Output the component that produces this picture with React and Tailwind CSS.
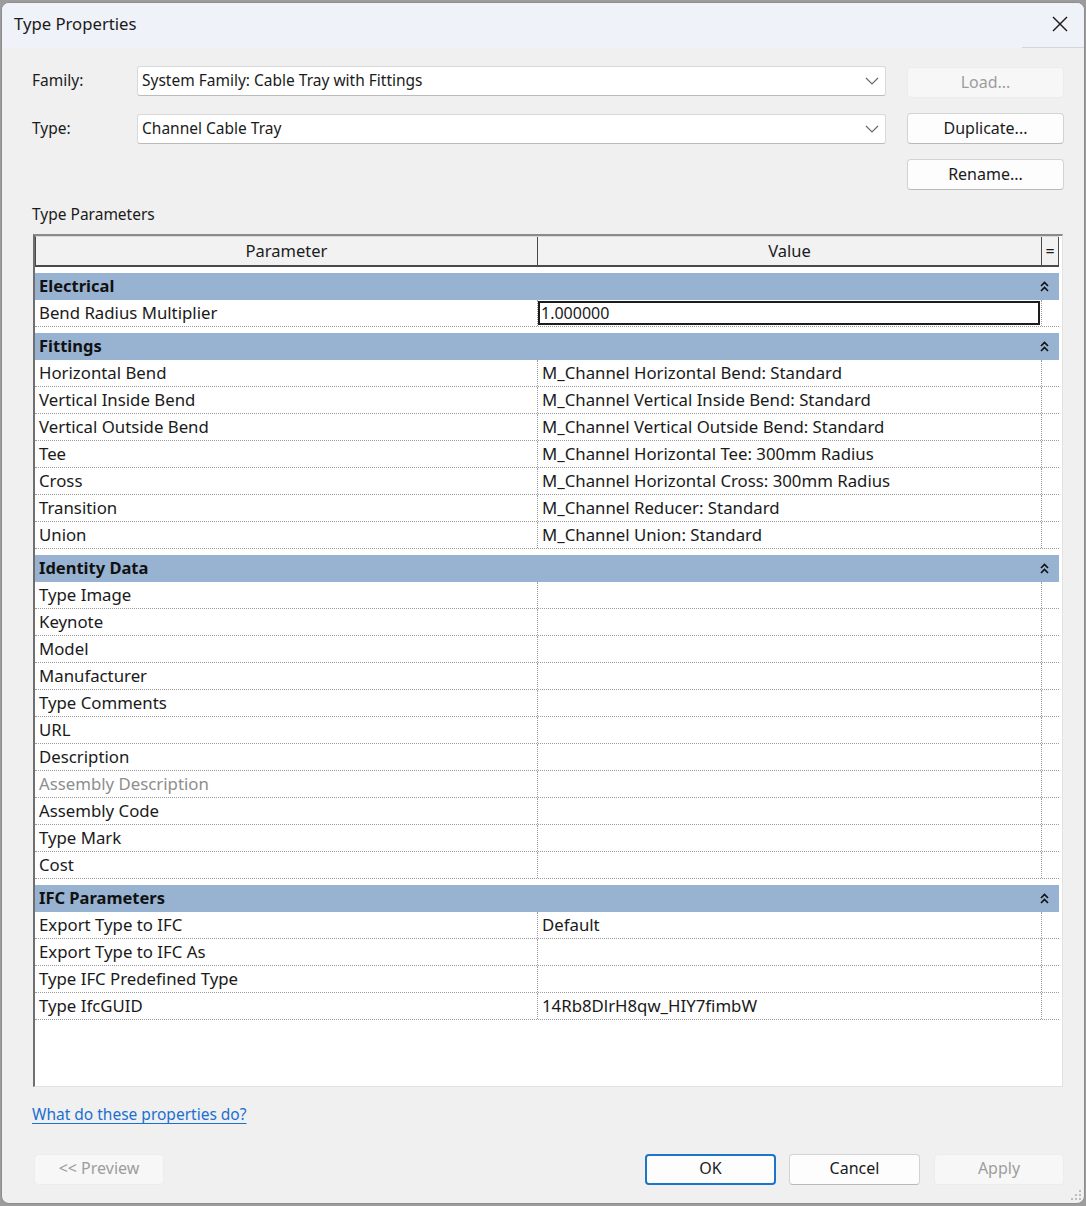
import React from "react";

const FONT = { fontFamily: '"Noto Sans", "Open Sans", sans-serif' };

const groups = [
  {
    name: "Electrical",
    rows: [{ name: "Bend Radius Multiplier", value: "1.000000", editing: true }],
  },
  {
    name: "Fittings",
    rows: [
      { name: "Horizontal Bend", value: "M_Channel Horizontal Bend: Standard" },
      { name: "Vertical Inside Bend", value: "M_Channel Vertical Inside Bend: Standard" },
      { name: "Vertical Outside Bend", value: "M_Channel Vertical Outside Bend: Standard" },
      { name: "Tee", value: "M_Channel Horizontal Tee: 300mm Radius" },
      { name: "Cross", value: "M_Channel Horizontal Cross: 300mm Radius" },
      { name: "Transition", value: "M_Channel Reducer: Standard" },
      { name: "Union", value: "M_Channel Union: Standard" },
    ],
  },
  {
    name: "Identity Data",
    rows: [
      { name: "Type Image" },
      { name: "Keynote" },
      { name: "Model" },
      { name: "Manufacturer" },
      { name: "Type Comments" },
      { name: "URL" },
      { name: "Description" },
      { name: "Assembly Description", muted: true },
      { name: "Assembly Code" },
      { name: "Type Mark" },
      { name: "Cost" },
    ],
  },
  {
    name: "IFC Parameters",
    rows: [
      { name: "Export Type to IFC", value: "Default" },
      { name: "Export Type to IFC As" },
      { name: "Type IFC Predefined Type" },
      { name: "Type IfcGUID", value: "14Rb8DlrH8qw_HIY7fimbW" },
    ],
  },
];

function Chevron() {
  return (
    <svg width="14" height="8" viewBox="0 0 14 8" className="shrink-0">
      <polyline points="1,1 7,7 13,1" fill="none" stroke="#6b6b6b" strokeWidth="1.2" />
    </svg>
  );
}

function CollapseIcon() {
  return (
    <svg width="9" height="11" viewBox="0 0 9 11">
      <polyline points="1,5 4.5,1.5 8,5" fill="none" stroke="#111" strokeWidth="1.6" />
      <polyline points="1,10 4.5,6.5 8,10" fill="none" stroke="#111" strokeWidth="1.6" />
    </svg>
  );
}

function Select({ text }) {
  return (
    <div className="flex h-[30px] w-[749px] items-center justify-between rounded-[3px] border border-[#d9d9d9] border-b-[#bcbcbc] bg-white pl-[4px] pr-[6px] text-[15.5px] text-[#1b1b1b]">
      <span>{text}</span>
      <Chevron />
    </div>
  );
}

function Button({ label, disabled, primary, className = "" }) {
  let look = "border border-[#d3d3d3] border-b-[#b9b9b9] bg-[#fdfdfd] text-[#1b1b1b]";
  if (disabled) look = "border border-[#ececec] bg-[#f7f7f7] text-[#9d9d9d]";
  if (primary) look = "border-2 border-[#1e74c8] bg-[#fdfdfd] text-[#1b1b1b]";
  return (
    <div
      className={`flex h-[31px] items-center justify-center rounded-[4px] pb-[2px] text-[16px] ${look} ${className}`}
    >
      {label}
    </div>
  );
}

function GroupHeader({ name }) {
  return (
    <div className="mt-[6px] flex h-[27px] w-[1024px] items-center justify-between bg-[#98b3d1] pb-[1px] pl-[4px] pr-[10px]">
      <span className="text-[16.5px] font-bold text-[#111]">{name}</span>
      <CollapseIcon />
    </div>
  );
}

function Row({ row }) {
  return (
    <div className="flex h-[27px] w-[1024px] border-b border-dotted border-[#9c9c9c] text-[16.8px]">
      <div
        className={`flex w-[502px] items-center pb-[2px] pl-[4px] ${row.muted ? "text-[#8e8e8e]" : "text-[#1a1a1a]"}`}
      >
        {row.name}
      </div>
      {row.editing ? (
        <div className="flex w-[504px] items-center border-l border-dotted border-[#9c9c9c] py-[1px]">
          <div className="flex h-full w-[502px] items-center border-2 border-[#1c1c1c] pb-[1px] pl-[1px] text-[16px] text-[#1a1a1a]">
            {row.value}
          </div>
        </div>
      ) : (
        <div className="flex w-[504px] items-center border-l border-dotted border-[#9c9c9c] pb-[2px] pl-[4px] text-[#1a1a1a]">
          {row.value}
        </div>
      )}
      <div className="w-[18px] border-l border-dotted border-[#9c9c9c]" />
    </div>
  );
}

export default function App() {
  return (
    <div className="h-[1206px] w-[1086px] overflow-hidden bg-[#9c9c9c] pl-[1px] pt-[2px]" style={FONT}>
      <div className="relative flex h-[1202px] w-[1084px] flex-col overflow-hidden rounded-[8px] border border-[#8d8d8d] bg-[#f0f0f0]">
        {/* title bar */}
        <div className="relative flex h-[45px] shrink-0 items-center justify-between bg-[#eff3f9] pb-[3px] pl-[12px] pr-[16px]">
          <span className="text-[16.7px] text-[#1a1a1a]">Type Properties</span>
          <svg width="16" height="16" viewBox="0 0 16 16">
            <line x1="1" y1="1" x2="15" y2="15" stroke="#1a1a1a" strokeWidth="1.4" />
            <line x1="15" y1="1" x2="1" y2="15" stroke="#1a1a1a" strokeWidth="1.4" />
          </svg>
          <div className="absolute bottom-0 right-0 h-px w-[62px] bg-[#d6d6d6]" />
        </div>

        {/* body */}
        <div className="flex flex-1 flex-col pl-[30px]">
          <div className="flex">
            <div className="flex flex-col pt-[18px]">
              <div className="flex items-center">
                <span className="w-[105px] text-[15.5px] text-[#1b1b1b]">Family:</span>
                <Select text="System Family: Cable Tray with Fittings" />
              </div>
              <div className="mt-[18px] flex items-center">
                <span className="w-[105px] text-[15.5px] text-[#1b1b1b]">Type:</span>
                <Select text="Channel Cable Tray" />
              </div>
            </div>
            <div className="ml-[21px] flex flex-col gap-[15px] pt-[19px]">
              <Button label="Load..." disabled className="w-[157px]" />
              <Button label="Duplicate..." className="w-[157px]" />
              <Button label="Rename..." className="w-[157px]" />
            </div>
          </div>

          <div className="mt-[13px] text-[15.5px] text-[#1b1b1b]">Type Parameters</div>

          {/* parameter grid */}
          <div className="ml-[1px] mt-[8px] h-[853px] w-[1030px] border-b border-l-2 border-r border-t-2 border-b-[#e2e2e2] border-l-[#6f6f6f] border-r-[#e2e2e2] border-t-[#8a8a8a] bg-white">
            <div className="flex h-[31px] w-[1024px] border-b-2 border-l border-t border-[#4a4a4a] border-t-[#d9d9d9] bg-[#f2f2f2] text-[16.5px] text-[#1b1b1b]">
              <div className="flex w-[501px] items-center justify-center">Parameter</div>
              <div className="flex w-[504px] items-center justify-center border-l border-[#4a4a4a]">Value</div>
              <div className="flex w-[18px] items-center justify-center border-l border-r border-[#4a4a4a] text-[16px]">
                =
              </div>
            </div>
            {groups.map((g) => (
              <div key={g.name}>
                <GroupHeader name={g.name} />
                {g.rows.map((r) => (
                  <Row key={r.name} row={r} />
                ))}
              </div>
            ))}
          </div>

          <div className="mt-[15px]">
            <span className="text-[15.5px] text-[#1a6fd0] underline underline-offset-[3px]">
              What do these properties do?
            </span>
          </div>

          <div className="mt-[27px] flex items-center pl-[2px] pr-[20px]">
            <Button label="<< Preview" disabled className="w-[130px]" />
            <div className="flex-1" />
            <Button label="OK" primary className="w-[131px]" />
            <Button label="Cancel" className="ml-[13px] w-[131px]" />
            <Button label="Apply" disabled className="ml-[14px] w-[130px]" />
          </div>
        </div>

        {/* size grip */}
        <svg className="absolute bottom-[2px] right-[2px]" width="12" height="12" viewBox="0 0 12 12">
          <rect x="9" y="1" width="2" height="2" fill="#bdbdbd" />
          <rect x="5" y="5" width="2" height="2" fill="#bdbdbd" />
          <rect x="9" y="5" width="2" height="2" fill="#bdbdbd" />
          <rect x="1" y="9" width="2" height="2" fill="#bdbdbd" />
          <rect x="5" y="9" width="2" height="2" fill="#bdbdbd" />
          <rect x="9" y="9" width="2" height="2" fill="#bdbdbd" />
        </svg>
      </div>
    </div>
  );
}
